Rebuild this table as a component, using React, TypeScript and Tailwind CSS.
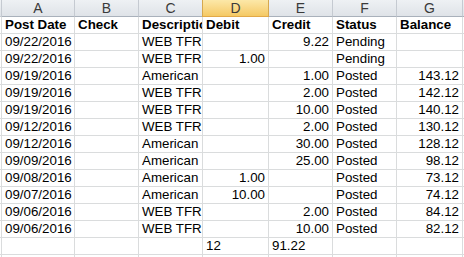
import React from "react";

type Row = [string, string, string, string, string, string, string];

const rows: Row[] = [
  ["09/22/2016", "", "WEB TFR FROM SHARE", "", "9.22", "Pending", ""],
  ["09/22/2016", "", "WEB TFR FROM SHARE", "1.00", "", "Pending", ""],
  ["09/19/2016", "", "American Savings", "", "1.00", "Posted", "143.12"],
  ["09/19/2016", "", "WEB TFR FROM SHARE", "", "2.00", "Posted", "142.12"],
  ["09/19/2016", "", "WEB TFR FROM SHARE", "", "10.00", "Posted", "140.12"],
  ["09/12/2016", "", "WEB TFR FROM SHARE", "", "2.00", "Posted", "130.12"],
  ["09/12/2016", "", "American Savings", "", "30.00", "Posted", "128.12"],
  ["09/09/2016", "", "American Savings", "", "25.00", "Posted", "98.12"],
  ["09/08/2016", "", "American Savings", "1.00", "", "Posted", "73.12"],
  ["09/07/2016", "", "American Savings", "10.00", "", "Posted", "74.12"],
  ["09/06/2016", "", "WEB TFR FROM SHARE", "", "2.00", "Posted", "84.12"],
  ["09/06/2016", "", "WEB TFR FROM SHARE", "", "10.00", "Posted", "82.12"],
];

const widths = ["w-[73px]", "w-[64px]", "w-[64px]", "w-[66px]", "w-[64px]", "w-[64px]", "w-[66px]"];
const letters = ["A", "B", "C", "D", "E", "F", "G"];
const rightAligned = [false, false, false, true, true, false, true];

function Cell({ w, text, right, bold }: { w: string; text: string; right?: boolean; bold?: boolean }) {
  return (
    <div
      className={`${w} shrink-0 h-[17px] border-r border-b border-[#dadcdd] overflow-hidden whitespace-nowrap flex items-end pb-[1px] ${
        right ? "justify-end pr-[3px]" : "pl-[3px]"
      } ${bold ? "font-bold" : ""} text-[13.33px] leading-[15px] text-black`}
    >
      <span>{text}</span>
    </div>
  );
}

function Lead() {
  return <div className="w-[2px] shrink-0 h-[17px] border-r border-b border-[#dadcdd] bg-white" />;
}

function Tail() {
  return <div className="flex-1 h-[17px] border-b border-[#dadcdd] bg-white" />;
}

export default function App() {
  return (
    <div
      className="w-[464px] h-[257px] overflow-hidden bg-white"
      style={{ fontFamily: '"Liberation Sans", Arial, sans-serif' }}
    >
      {/* column headers */}
      <div className="flex h-[17px]">
        <div className="w-[2px] shrink-0 h-[17px] bg-gradient-to-b from-[#eef1f4] to-[#dfe3e8] border-r border-b border-[#c5cad1]" />
        {letters.map((l, i) =>
          l === "D" ? (
            <div
              key={l}
              className={`${widths[i]} shrink-0 h-[17px] bg-gradient-to-b from-[#fce8a8] to-[#f5c963] border-r border-l border-b border-[#d6a84e] border-b-[#e2a948] -ml-[1px] w-[67px] flex items-center justify-center text-[14px] text-[#3a3a3a]`}
            >
              {l}
            </div>
          ) : (
            <div
              key={l}
              className={`${widths[i]} shrink-0 h-[17px] bg-gradient-to-b from-[#eef1f4] to-[#dfe3e8] border-r border-b border-[#c5cad1] border-b-[#a9b1bb] flex items-center justify-center text-[14px] text-[#3a3a3a]`}
            >
              {l}
            </div>
          )
        )}
        <div className="flex-1 h-[17px] bg-gradient-to-b from-[#eef1f4] to-[#dfe3e8] border-b border-[#a9b1bb]" />
      </div>

      {/* title row */}
      <div className="flex">
        <Lead />
        {["Post Date", "Check", "Description", "Debit", "Credit", "Status", "Balance"].map((t, i) => (
          <Cell key={t} w={widths[i]} text={t} bold />
        ))}
        <Tail />
      </div>

      {rows.map((r, ri) => (
        <div className="flex" key={ri}>
          <Lead />
          {r.map((t, i) => (
            <Cell key={i} w={widths[i]} text={t} right={rightAligned[i]} />
          ))}
          <Tail />
        </div>
      ))}

      {/* totals row */}
      <div className="flex">
        <Lead />
        {["", "", "", "12", "91.22", "", ""].map((t, i) => (
          <Cell key={i} w={widths[i]} text={t} />
        ))}
        <Tail />
      </div>
      <div className="flex">
        <Lead />
        {["", "", "", "", "", "", ""].map((t, i) => (
          <Cell key={i} w={widths[i]} text={t} />
        ))}
        <Tail />
      </div>
    </div>
  );
}
